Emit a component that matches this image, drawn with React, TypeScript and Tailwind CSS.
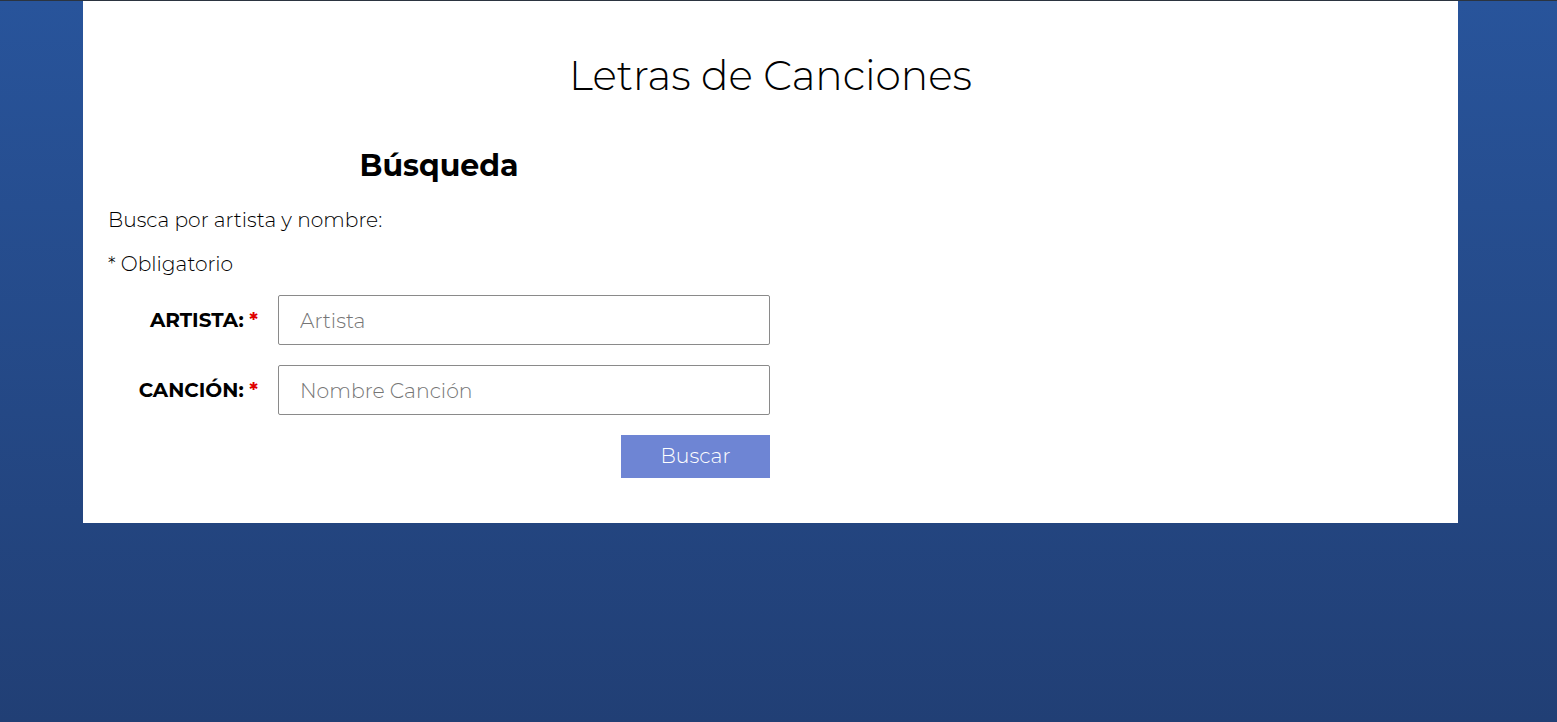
const font = "font-['Montserrat','Inter','Open_Sans',sans-serif]"

function Field({ label, placeholder }: { label: string; placeholder: string }) {
  return (
    <div className="flex items-center">
      <label className="w-[170px] pr-[20px] text-right text-[20px] font-bold text-black">
        {label} <span className="text-[#e00000]">*</span>
      </label>
      <input
        type="text"
        placeholder={placeholder}
        className="h-[50px] w-[492px] border border-[#8a8a8a] rounded-[2px] px-[21px] text-[20.4px] font-light text-black placeholder:text-[#757575] outline-none"
      />
    </div>
  )
}

export default function App() {
  return (
    <div className={`min-h-[722px] border-t border-[#2b3440] bg-gradient-to-b from-[#28549b] to-[#213f75] ${font}`}>
      <main className="ml-[83px] w-[1375px] bg-white pb-[45px]">
        <h1 className="pt-[50px] text-center text-[40.7px] font-light leading-[50px] text-black">
          Letras de Canciones
        </h1>
        <section className="mt-[45px] w-[687px] pl-[25px]">
          <h2 className="text-center text-[30px] font-bold leading-[40px] text-black">Búsqueda</h2>
          <p className="mt-[22px] text-[20.2px] font-light leading-[24px] text-black">Busca por artista y nombre:</p>
          <p className="mt-[20px] text-[20.2px] font-light leading-[24px] text-black">* Obligatorio</p>
          <form className="mt-[19px] flex flex-col gap-[20px]" onSubmit={(e) => e.preventDefault()}>
            <Field label="ARTISTA:" placeholder="Artista" />
            <Field label="CANCIÓN:" placeholder="Nombre Canción" />
            <div className="flex justify-end">
              <button className="h-[43px] w-[149px] bg-[#6e85d4] text-[20.4px] font-light text-white">
                Buscar
              </button>
            </div>
          </form>
        </section>
      </main>
    </div>
  )
}
